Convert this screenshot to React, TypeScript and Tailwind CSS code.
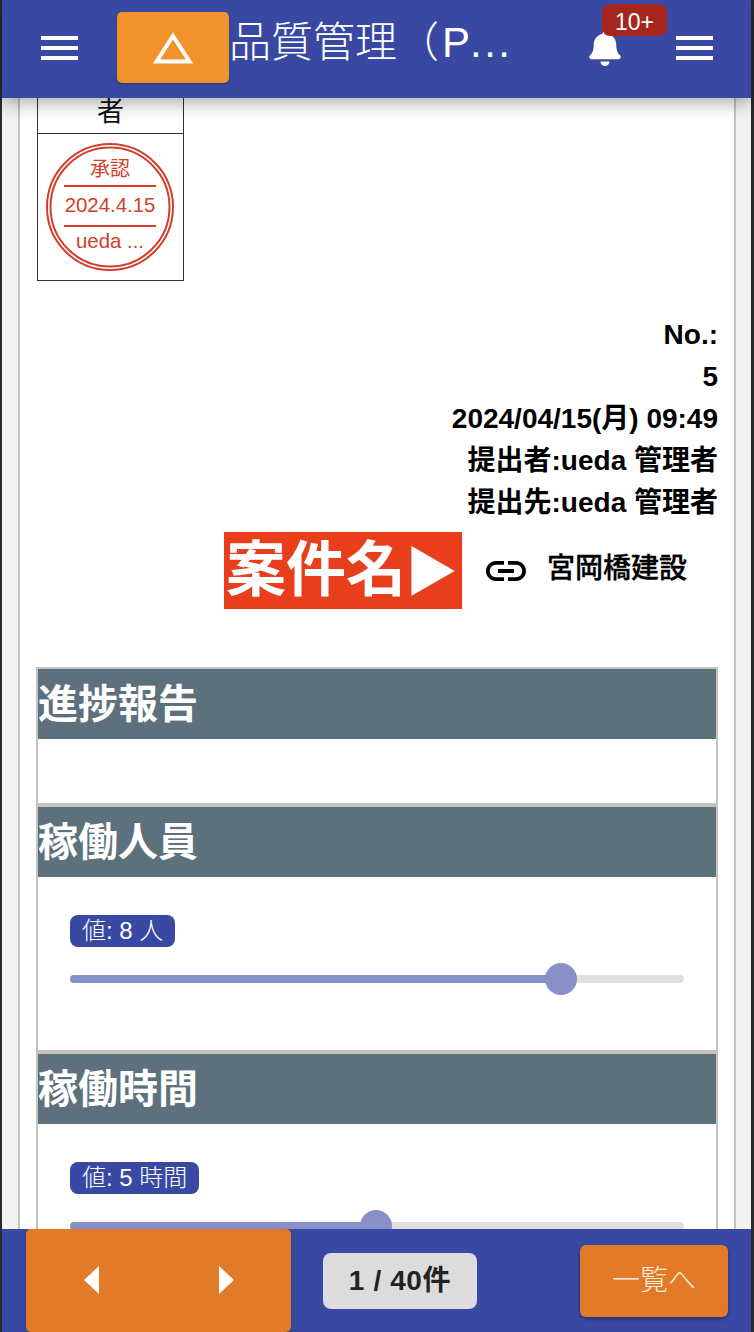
import React from "react";
import { FaBell } from "react-icons/fa";
import { MdLink } from "react-icons/md";

function Burger() {
  return (
    <svg width="37" height="24" viewBox="0 0 37 24" className="block">
      <rect x="0" y="0" width="37" height="4" fill="#fff" />
      <rect x="0" y="10" width="37" height="4" fill="#fff" />
      <rect x="0" y="20" width="37" height="4" fill="#fff" />
    </svg>
  );
}

function Stamp() {
  const c = "#d1402c";
  const font = "'Liberation Sans','Noto Sans CJK JP',sans-serif";
  return (
    <svg width="130" height="130" viewBox="0 0 130 130" className="block -ml-[2px]">
      <circle cx="65" cy="65" r="63" fill="none" stroke={c} strokeWidth="2" />
      <circle cx="65" cy="65" r="59.5" fill="none" stroke={c} strokeWidth="2" />
      <line x1="19" y1="44" x2="111" y2="44" stroke={c} strokeWidth="2" />
      <line x1="19" y1="84" x2="111" y2="84" stroke={c} strokeWidth="2" />
      <text x="65" y="34" textAnchor="middle" fontSize="20" fill={c} fontFamily={font}>承認</text>
      <text x="65" y="70" textAnchor="middle" fontSize="20.4" fill={c} fontFamily={font}>2024.4.15</text>
      <text x="65" y="106" textAnchor="middle" fontSize="20.4" fill={c} fontFamily={font}>ueda ...</text>
    </svg>
  );
}

function SectionHead({ title }: { title: string }) {
  return (
    <div className="h-[70px] bg-[#5d717d] flex items-center text-white text-[40px] font-bold leading-none">
      <span>{title}</span>
    </div>
  );
}

function Slider({ label, labelWidth, pct }: { label: string; labelWidth: string; pct: number }) {
  return (
    <div className="px-[32px] pt-[38px]">
      <div className={`${labelWidth} h-[32px] rounded-[8px] bg-[#3949a3] text-white text-[24px] font-light leading-[32px] pl-[12px] whitespace-nowrap`}>
        {label}
      </div>
      <div className="relative h-[8px] mt-[28px] rounded-full bg-[#e0e0e0]">
        <div className="h-full rounded-full bg-[#8890c8]" style={{ width: `${pct}%` }} />
        <div className="absolute top-[-12px] w-[32px] h-[32px] rounded-full bg-[#8890c8] -ml-[16px]" style={{ left: `${pct}%` }} />
      </div>
    </div>
  );
}

export default function App() {
  return (
    <div
      className="w-[754px] h-[1332px] overflow-hidden bg-[#2a2a2a] pl-[2px] pr-[3px] flex flex-col"
      style={{ fontFamily: "'Liberation Sans','Noto Sans CJK JP',sans-serif" }}
    >
      <header className="relative z-10 h-[98px] shrink-0 bg-[#3949a3] shadow-[0_6px_16px_rgba(0,0,0,0.3)] flex items-start">
        <div className="ml-[39px] mt-[36px]"><Burger /></div>
        <div className="ml-[39px] mt-[12px] w-[112px] h-[71px] rounded-[5px] bg-[#f0932b] flex items-center justify-center shadow-[0_1px_3px_rgba(0,0,0,0.3)]">
          <svg width="40" height="32" viewBox="0 0 40 32">
            <polygon points="20,4 36.5,29.5 3.5,29.5" fill="none" stroke="#fff" strokeWidth="4" />
          </svg>
        </div>
        <div className="mt-[19px] w-[284px] text-white text-[42px] font-light leading-[48px] whitespace-nowrap">品質管理（<span className="ml-[3px]">P</span><span className="tracking-[2.5px]">...</span></div>
        <div className="relative ml-[75px] mt-[30px] w-[33px] h-[38px]">
          <FaBell className="text-white" size={36} style={{ marginLeft: -1 }} />
          <div className="absolute left-[14px] top-[-26px] w-[65px] h-[32px] rounded-[8px] bg-[#a6261d] text-white text-[23px] font-light leading-[36px] text-center">10+</div>
        </div>
        <div className="ml-[55px] mt-[36px]"><Burger /></div>
      </header>

      <div className="flex-1 min-h-0 overflow-hidden bg-[#f2f2f2] pl-[16px] pr-[15px]">
        <main className="h-full overflow-hidden bg-white border-x-2 border-[#c4c4c4] px-[16px]">
          <div className="ml-[1px] w-[147px] border-x border-b border-[#333] h-[36px] flex items-center justify-center text-[27px] leading-none text-[#111] pb-[7px]">者</div>
          <div className="ml-[1px] w-[147px] h-[147px] border-x border-b border-[#333] flex items-center justify-center">
            <Stamp />
          </div>

          <div className="mt-[33px] text-right text-[28px] font-bold leading-[42px] text-black">
            <div>No.:</div>
            <div>5</div>
            <div>2024/04/15(月) 09:49</div>
            <div>提出者:ueda 管理者</div>
            <div>提出先:ueda 管理者</div>
          </div>

          <div className="mt-[8px] flex items-center ml-[188px]">
            <div className="w-[238px] h-[77px] bg-[#e83e1c] text-white text-[60px] font-bold leading-[77px] pl-[2px] whitespace-nowrap overflow-hidden">案件名<span className="text-[53px] -ml-[1px]">▶</span></div>
            <MdLink size={48} className="ml-[20px] text-black shrink-0" />
            <span className="ml-[17px] -mt-[3px] text-[28px] font-medium leading-none text-black whitespace-nowrap [-webkit-text-stroke:0.35px_#000]">宮岡橋建設</span>
          </div>

          <div className="mt-[58px] border-2 border-[#c4c4c4] border-b-0">
            <SectionHead title="進捗報告" />
            <div className="h-[64px]" />
            <div className="h-[4px] bg-[#c4c4c4]" />
            <SectionHead title="稼働人員" />
            <div className="h-[173px]">
              <Slider label="値: 8 人" labelWidth="w-[105px]" pct={80} />
            </div>
            <div className="h-[4px] bg-[#c4c4c4]" />
            <SectionHead title="稼働時間" />
            <div className="h-[173px]">
              <Slider label="値: 5 時間" labelWidth="w-[129px]" pct={49.85} />
            </div>
          </div>
        </main>
      </div>

      <footer className="relative z-10 h-[103px] shrink-0 bg-[#3949a3] flex items-center">
        <div className="ml-[24px] w-[265px] h-[103px] rounded-[5px] bg-[#e27a28] flex items-center shadow-[0_1px_3px_rgba(0,0,0,0.3)]">
          <svg width="15" height="28" viewBox="0 0 15 28" className="ml-[58px] -mt-[1px]"><polygon points="15,0 15,28 0,14" fill="#fff" /></svg>
          <svg width="15" height="28" viewBox="0 0 15 28" className="ml-[120px] -mt-[1px]"><polygon points="0,0 0,28 15,14" fill="#fff" /></svg>
        </div>
        <div className="ml-[32px] w-[154px] h-[56px] rounded-[8px] bg-[#dcdcdc] flex items-center justify-center text-[28px] tracking-[0.6px] font-bold text-[#222] leading-none">1 / 40件</div>
        <div className="ml-[103px] w-[148px] h-[72px] rounded-[6px] bg-[#e27a28] flex items-center justify-center text-[28px] font-light text-[#fdeedd] leading-none shadow-[0_2px_4px_rgba(0,0,0,0.35)]">一覧へ</div>
      </footer>
    </div>
  );
}
